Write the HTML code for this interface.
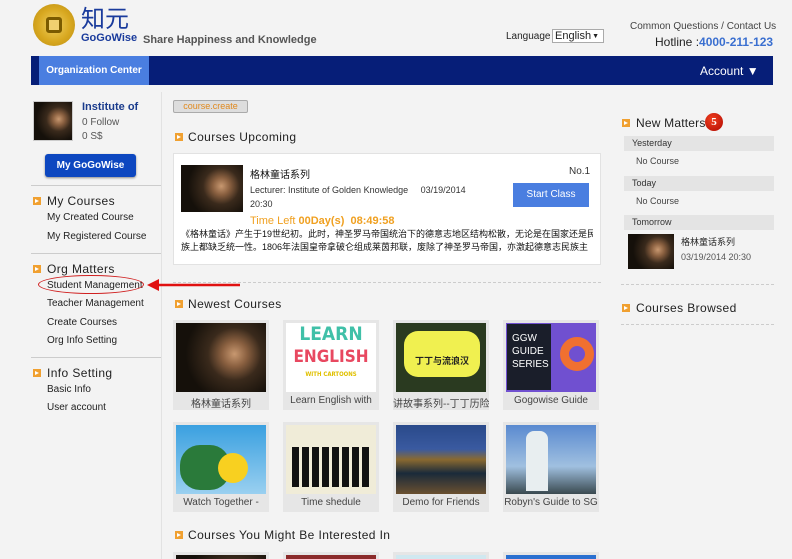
<!DOCTYPE html>
<html><head><meta charset="utf-8">
<style>
*{margin:0;padding:0;box-sizing:border-box}
html,body{width:792px;height:559px;overflow:hidden}
body{background:#f3f3f3;font-family:"Liberation Sans","Noto Sans CJK SC",sans-serif;position:relative;color:#222}
.a{position:absolute}
.ic{position:absolute;width:8px;height:8px;background:#f0a030}
.ic:after{content:"";position:absolute;left:2px;top:2px;border-left:4px solid #fff;border-top:2px solid transparent;border-bottom:2px solid transparent}
.h{font-size:12px;color:#222;letter-spacing:.4px;font-family:"Liberation Sans",sans-serif;white-space:nowrap}
.lk{font-size:10px;color:#222;white-space:nowrap}
.portrait{background:radial-gradient(circle at 65% 45%,#c89870 0,#8a6040 18%,#3a2a1c 38%,#15100a 70%)}
.tile{position:absolute;width:96px;height:90px;background:#e6e6e6}
.tile .im{position:absolute;left:3px;top:3px;width:90px;height:69px;overflow:hidden}
.tile .lb{position:absolute;top:75px;width:96px;text-align:center;font-size:10px;color:#444;white-space:nowrap;overflow:hidden}
.sep{position:absolute;height:0;border-top:1px dashed #ccc}
</style></head><body>
<!-- header -->
<div class="a" style="left:33px;top:4px;width:42px;height:42px;border-radius:50%;background:radial-gradient(circle,#f0d060 0,#d8a820 55%,#b88a10 100%)"></div>
<div class="a" style="left:46px;top:17px;width:16px;height:16px;border:3px solid #7a5a00;border-radius:3px;background:#f0d070"></div>
<div class="a" style="left:81px;top:3px;font-size:24px;color:#1a3b9c;font-family:'Noto Sans CJK SC',sans-serif;line-height:28px">知元</div>
<div class="a" style="left:81px;top:32px;font-size:11px;font-weight:bold;color:#1a3b9c">GoGoWise</div>
<div class="a" style="left:143px;top:34px;font-size:11px;font-weight:bold;color:#555">Share Happiness and Knowledge</div>
<div class="a" style="left:506px;top:31px;font-size:10px;color:#222">Language</div>
<div class="a" style="left:552px;top:29px;width:52px;height:14px;border:1px solid #aaa;background:#fff;font-size:11px;padding-left:2px;line-height:12px;white-space:nowrap">English<span style="position:absolute;right:4px;top:1px;font-size:7px">▼</span></div>
<div class="a" style="left:630px;top:21px;font-size:10px;color:#444">Common Questions / Contact Us</div>
<div class="a" style="left:655px;top:35px;font-size:12px;color:#222">Hotline :<b style="color:#3a6fd0">4000-211-123</b></div>
<!-- nav -->
<div class="a" style="left:31px;top:56px;width:742px;height:29px;background:#061e78"></div>
<div class="a" style="left:39px;top:56px;width:110px;height:29px;background:#4a7ee0;color:#fff;font-size:10px;font-weight:bold;text-align:center;line-height:29px">Organization Center</div>
<div class="a" style="left:700px;top:64px;color:#fff;font-size:12px">Account ▼</div>
<!-- sidebar -->
<div class="a" style="left:161px;top:92px;width:1px;height:467px;background:#e2e2e2"></div>
<div class="a portrait" style="left:33px;top:101px;width:40px;height:40px;border:1px solid #ccc"></div>
<div class="a" style="left:82px;top:101px;font-size:11px;font-weight:bold;color:#1a3b8c">Institute of</div>
<div class="a" style="left:82px;top:117px;font-size:10px;color:#555">0 Follow</div>
<div class="a" style="left:82px;top:131px;font-size:10px;color:#555">0 S$</div>
<div class="a" style="left:45px;top:154px;width:91px;height:23px;background:#0d47c0;border-radius:3px;color:#fff;font-size:10px;font-weight:bold;text-align:center;line-height:23px;box-shadow:0 1px 2px #888">My GoGoWise</div>
<div class="a" style="left:31px;top:185px;width:130px;height:1px;background:#ccc"></div>
<div class="ic" style="left:33px;top:197px"></div><div class="a h" style="left:47px;top:194px">My Courses</div>
<div class="a lk" style="left:47px;top:212px">My Created Course</div>
<div class="a lk" style="left:47px;top:231px">My Registered Course</div>
<div class="a" style="left:31px;top:253px;width:130px;height:1px;background:#ccc"></div>
<div class="ic" style="left:33px;top:265px"></div><div class="a h" style="left:47px;top:262px">Org Matters</div>
<div class="a lk" style="left:47px;top:280px">Student Management</div>
<div class="a" style="left:38px;top:275px;width:106px;height:19px;border:1px solid #d02020;border-radius:50%"></div>
<svg class="a" style="left:145px;top:278px" width="95" height="14"><path d="M95 7 L12 7" stroke="#e01010" stroke-width="2.5"/><path d="M2 7 L14 1 L14 13Z" fill="#e01010"/></svg>
<div class="a lk" style="left:47px;top:298px">Teacher Management</div>
<div class="a lk" style="left:47px;top:317px">Create Courses</div>
<div class="a lk" style="left:47px;top:335px">Org Info Setting</div>
<div class="a" style="left:31px;top:357px;width:130px;height:1px;background:#ccc"></div>
<div class="ic" style="left:33px;top:369px"></div><div class="a h" style="left:47px;top:366px">Info Setting</div>
<div class="a lk" style="left:47px;top:384px">Basic Info</div>
<div class="a lk" style="left:47px;top:402px">User account</div>
<!-- main -->
<div class="a" style="left:173px;top:100px;width:75px;height:13px;background:#ddd;border:1px solid #aaa;border-radius:2px;font-size:9px;color:#e08a20;text-align:center;line-height:11px">course.create</div>
<div class="ic" style="left:175px;top:133px"></div><div class="a h" style="left:188px;top:130px">Courses Upcoming</div>
<div class="a" style="left:173px;top:153px;width:428px;height:112px;background:#fff;border:1px solid #e2e2e2"></div>
<div class="a portrait" style="left:181px;top:165px;width:62px;height:47px"></div>
<div class="a" style="left:250px;top:166px;font-size:10px;color:#111">格林童话系列</div>
<div class="a" style="left:569px;top:166px;font-size:10px;color:#333">No.1</div>
<div class="a" style="left:250px;top:185px;font-size:9px;color:#333">Lecturer: Institute of Golden Knowledge &nbsp;&nbsp;&nbsp;&nbsp;03/19/2014</div>
<div class="a" style="left:250px;top:199px;font-size:9px;color:#333">20:30</div>
<div class="a" style="left:513px;top:183px;width:76px;height:24px;background:#4a7ee0;color:#fff;font-size:10px;text-align:center;line-height:24px">Start Class</div>
<div class="a" style="left:250px;top:215px;font-size:11px;color:#f0a020">Time Left <b>00Day(s) &nbsp;08:49:58</b></div>
<div class="a" style="left:181px;top:228px;width:412px;font-size:9px;line-height:13px;color:#111;white-space:nowrap;overflow:hidden">《格林童话》产生于19世纪初。此时，神圣罗马帝国统治下的德意志地区结构松散，无论是在国家还是民<br>族上都缺乏统一性。1806年法国皇帝拿破仑组成莱茵邦联，废除了神圣罗马帝国，亦激起德意志民族主</div>
<div class="sep" style="left:173px;top:282px;width:428px"></div>
<div class="ic" style="left:175px;top:300px"></div><div class="a h" style="left:188px;top:297px">Newest Courses</div>
<div class="tile" style="left:173px;top:320px"><div class="im portrait"></div><div class="lb">格林童话系列</div></div>
<div class="tile" style="left:283px;top:320px"><div class="im" style="background:#fff;text-align:center;font-weight:bold;font-family:'DejaVu Sans Condensed','DejaVu Sans';line-height:23px"><div style="color:#40c0a8;font-size:19px">LEARN</div><div style="color:#e84860;font-size:17px">ENGLISH</div><div style="color:#e0c000;font-size:6px;line-height:12px">WITH CARTOONS</div></div><div class="lb">Learn English with</div></div>
<div class="tile" style="left:393px;top:320px"><div class="im" style="background:#2a3a20"><div style="position:absolute;left:8px;top:8px;width:76px;height:46px;background:#f0f050;border-radius:14px;text-align:center;font-size:9px;line-height:60px;font-weight:bold;color:#222">丁丁与流浪汉</div></div><div class="lb">讲故事系列--丁丁历险</div></div>
<div class="tile" style="left:503px;top:320px"><div class="im" style="background:#7050d0"><div style="position:absolute;left:1px;top:1px;width:44px;height:66px;background:#1a1e2a;color:#fff;font-size:10px;line-height:13px;padding:8px 5px">GGW<br>GUIDE<br>SERIES</div><div style="position:absolute;left:54px;top:14px;width:34px;height:34px;border:9px solid #f07030;border-radius:50%"></div></div><div class="lb">Gogowise Guide</div></div>
<div class="tile" style="left:173px;top:422px"><div class="im" style="background:linear-gradient(#3aa0e0,#9ad0f0)"><div style="position:absolute;left:4px;top:20px;width:50px;height:45px;background:#2a7a3a;border-radius:20px"></div><div style="position:absolute;left:42px;top:28px;width:30px;height:30px;background:#f8d020;border-radius:50%"></div></div><div class="lb">Watch Together -</div></div>
<div class="tile" style="left:283px;top:422px"><div class="im" style="background:#f0ecd8"><div style="position:absolute;left:6px;top:22px;width:80px;height:40px;background:repeating-linear-gradient(90deg,#111 0 7px,transparent 7px 10px)"></div></div><div class="lb">Time shedule</div></div>
<div class="tile" style="left:393px;top:422px"><div class="im" style="background:linear-gradient(#2a4a8a 0,#3a5aa0 35%,#8a6a30 50%,#1a2a3a 70%,#6a5030 100%)"></div><div class="lb">Demo for Friends</div></div>
<div class="tile" style="left:503px;top:422px"><div class="im" style="background:linear-gradient(#5a8ad0,#a0c0e0 60%,#3a4a50)"><div style="position:absolute;left:20px;top:6px;width:22px;height:60px;background:#e8eef0;border-radius:8px 8px 0 0"></div></div><div class="lb">Robyn's Guide to SG</div></div>
<div class="ic" style="left:175px;top:531px"></div><div class="a h" style="left:188px;top:528px">Courses You Might Be Interested In</div>
<div class="tile" style="left:173px;top:552px;height:7px"><div class="im portrait"></div></div>
<div class="tile" style="left:283px;top:552px;height:7px"><div class="im" style="background:#8a2a2a"></div></div>
<div class="tile" style="left:393px;top:552px;height:7px"><div class="im" style="background:#d0e8f0"></div></div>
<div class="tile" style="left:503px;top:552px;height:7px"><div class="im" style="background:#2a70d0"></div></div>
<!-- right -->
<div class="ic" style="left:622px;top:119px"></div><div class="a h" style="left:636px;top:116px;letter-spacing:.2px">New Matters</div>
<div class="a" style="left:705px;top:113px;width:18px;height:18px;border-radius:50%;background:radial-gradient(circle at 40% 35%,#f04020,#b00800);color:#fff;font-size:11px;font-weight:bold;text-align:center;line-height:18px;font-family:'Liberation Serif'">5</div>
<div class="a" style="left:624px;top:136px;width:150px;height:15px;background:#e4e4e4;font-size:9px;padding-left:8px;line-height:15px;color:#333">Yesterday</div>
<div class="a" style="left:636px;top:156px;font-size:9px;color:#444">No Course</div>
<div class="a" style="left:624px;top:176px;width:150px;height:15px;background:#e4e4e4;font-size:9px;padding-left:8px;line-height:15px;color:#333">Today</div>
<div class="a" style="left:636px;top:196px;font-size:9px;color:#444">No Course</div>
<div class="a" style="left:624px;top:215px;width:150px;height:15px;background:#e4e4e4;font-size:9px;padding-left:8px;line-height:15px;color:#333">Tomorrow</div>
<div class="a portrait" style="left:628px;top:234px;width:46px;height:35px"></div>
<div class="a" style="left:681px;top:235px;font-size:9px;color:#222">格林童话系列</div>
<div class="a" style="left:681px;top:252px;font-size:9px;color:#555">03/19/2014 20:30</div>
<div class="sep" style="left:621px;top:284px;width:153px"></div>
<div class="ic" style="left:622px;top:304px"></div><div class="a h" style="left:636px;top:301px">Courses Browsed</div>
<div class="sep" style="left:621px;top:324px;width:153px"></div>
</body></html>
